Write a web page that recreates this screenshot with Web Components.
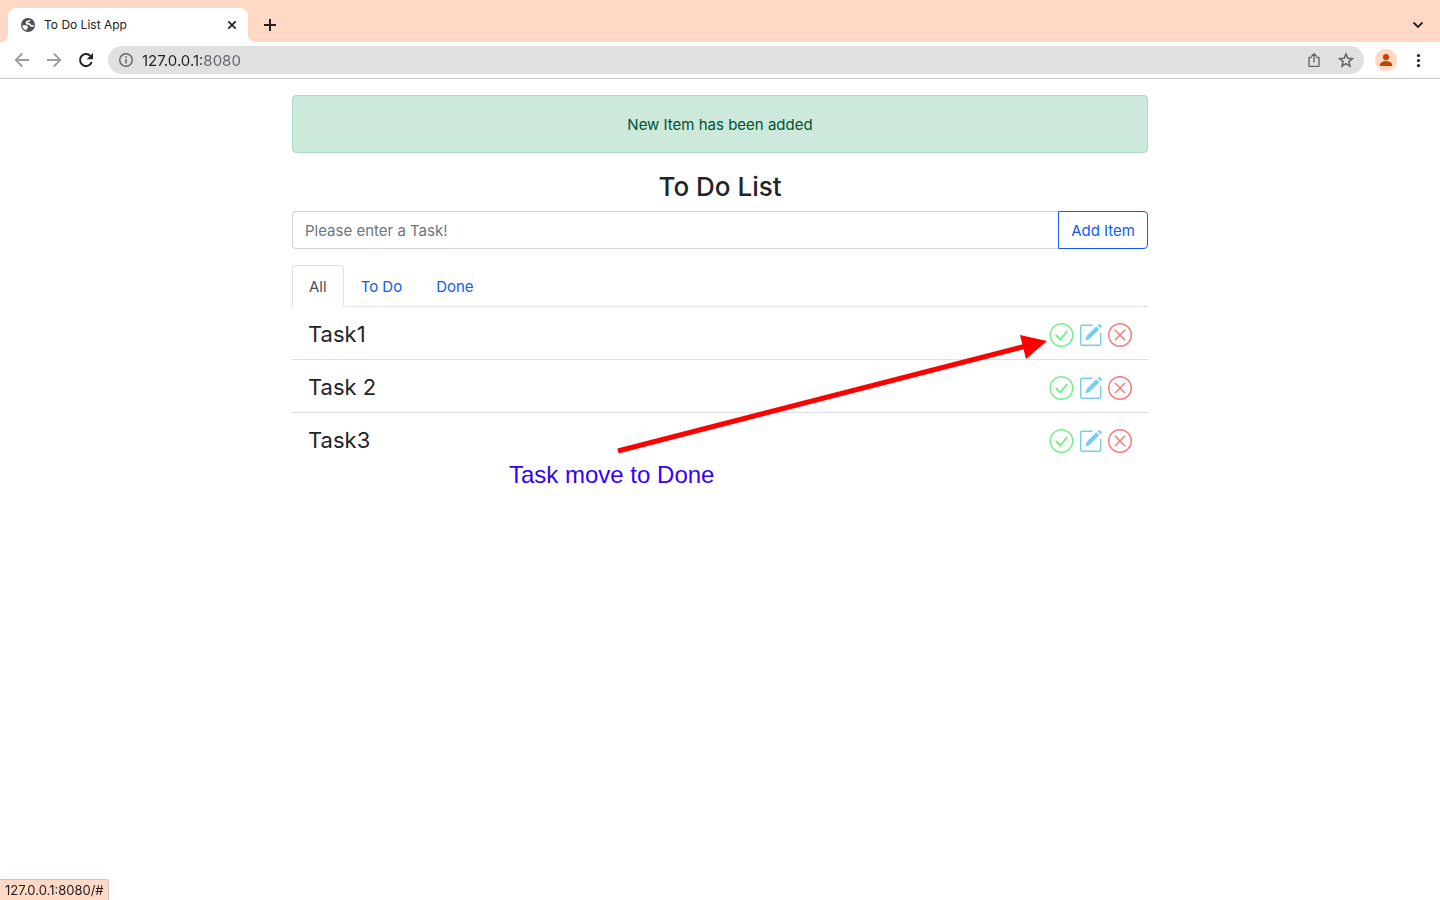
<!DOCTYPE html>
<html lang="en">
<head>
<meta charset="utf-8">
<title>To Do List App</title>
<style>
  body { margin: 0; background: #fff; font-family: Inter, Roboto, "Liberation Sans", sans-serif; color: #212529; }
</style>
</head>
<body>
<browser-window>
  <tab-strip slot="tabs"><browser-tab>To Do List App</browser-tab></tab-strip>
  <browser-toolbar slot="toolbar"></browser-toolbar>
  <todo-app>
    <alert-box slot="alert">New Item has been added</alert-box>
    <task-form slot="form"></task-form>
    <task-tabs slot="tabs"></task-tabs>
    <task-item>Task1</task-item>
    <task-item>Task 2</task-item>
    <task-item>Task3</task-item>
    <arrow-note slot="note">Task move to Done</arrow-note>
  </todo-app>
  <link-status slot="status">127.0.0.1:8080/#</link-status>
</browser-window>
<script>
const define = (name, markup) => {
  const template = document.createElement('template');
  template.innerHTML = '<style>*{box-sizing:border-box}svg{display:block}button{font:inherit;padding:0;border:0;background:none;cursor:pointer}</style>' + markup;
  customElements.define(name, class extends HTMLElement {
    constructor() {
      super();
      this.attachShadow({ mode: 'open' }).append(template.content.cloneNode(true));
    }
  });
};

define('browser-window', `
<style>:host{display:flex;flex-direction:column;min-height:100vh}main{flex:1}</style>
<header><slot name="tabs"></slot><slot name="toolbar"></slot></header>
<main><slot></slot></main>
<slot name="status"></slot>`);

define('tab-strip', `
<style>
:host{display:flex;align-items:flex-end;background:#ffd9c6;padding:8px 16px 0 8px}
button{display:grid;place-items:center;width:28px;height:34px}
.new{margin-left:8px}.search{width:12px;margin-left:auto}
</style>
<slot></slot>
<button class="new" aria-label="New tab"><svg width="14" height="14" viewBox="0 0 14 14"><path d="M7 1v12M1 7h12" stroke="#202124" stroke-width="2"/></svg></button>
<button class="search" aria-label="Search tabs"><svg width="12" height="8" viewBox="0 0 12 8"><path d="M1.500 1.500L6 6l4.500-4.500" fill="none" stroke="#202124" stroke-width="1.800"/></svg></button>`);

define('browser-tab', `
<style>
:host{display:flex;align-items:center;position:relative;width:240px;height:34px;padding:0 10px 0 12px;box-sizing:border-box;background:#fff;border-radius:8px 8px 0 0;font-size:12px;color:#202124}
:host::before,:host::after{content:"";position:absolute;bottom:0;width:8px;height:8px}
:host::before{right:100%;background:radial-gradient(circle at 0 0,transparent 8px,#fff 8px)}
:host::after{left:100%;background:radial-gradient(circle at 100% 0,transparent 8px,#fff 8px)}
span{flex:1;padding:0 0 2px 8px}
button{display:grid;place-items:center;width:12px;height:16px}
</style>
<svg width="16" height="16" viewBox="0 0 16 16"><circle cx="8" cy="8" r="7" fill="#4c5057"/><path d="M9.700 3.200c-.4 1-1 1.300-2 1.400-.8.100-1.200.5-1.200 1.100 0 .8.600 1.100 1.400 1.100h1c.8 0 1.200.4 1.300 1.100.1.700.6 1 1.300 1h2.200" fill="none" stroke="#fff" stroke-width="1.700"/><path d="M2.200 8.300h3.300c1.500 0 2.300.7 2.300 1.800v.6c0 .5-.5.800-1 .8v1.800A5.600 5.600 0 0 1 2.200 8.300z" fill="#fff"/></svg>
<span><slot></slot></span>
<button aria-label="Close tab"><svg width="10" height="10" viewBox="0 0 10 10"><path d="M1.300 1.300l7.400 7.400M8.700 1.300L1.300 8.700" stroke="#202124" stroke-width="1.700"/></svg></button>`);

define('browser-toolbar', `
<style>
:host{display:flex;align-items:center;height:37px;padding:0 16px 0 14px;box-sizing:border-box;background:#fff;border-bottom:1px solid #cacaca}
.nav{display:flex;gap:16px}
form{flex:1;display:flex;align-items:center;height:28px;margin:0 10px 0 14px;padding:0 10px;border-radius:14px;background:#e0e0e0}
input{flex:1;min-width:0;margin:0;padding:0 8px;border:0;outline:0;font:15px Inter,Roboto,sans-serif;color:#202124;background:linear-gradient(90deg,#202124 67px,#5f6368 67px);-webkit-background-clip:text;background-clip:text;-webkit-text-fill-color:transparent}
.tools{display:flex;gap:16px}
.avatar{width:24px;height:24px;border-radius:12px;overflow:hidden}
.more{margin-left:10px}
</style>
<div class="nav">
<button aria-label="Back"><svg width="16" height="16" viewBox="0 0 16 16"><path d="M15 8H2M8.200 1.500L1.700 8l6.500 6.500" fill="none" stroke="#9b9ca0" stroke-width="1.800"/></svg></button>
<button aria-label="Forward"><svg width="16" height="16" viewBox="0 0 16 16"><path d="M1 8h13M7.800 1.500L14.300 8l-6.500 6.500" fill="none" stroke="#9b9ca0" stroke-width="1.800"/></svg></button>
<button aria-label="Reload"><svg width="16" height="16" viewBox="0 0 16 16"><path d="M13.700 10A6 6 0 1 1 12.400 3.900" fill="none" stroke="#202124" stroke-width="2"/><path d="M15 1v6.300H8.700z" fill="#202124"/></svg></button>
</div>
<form>
<svg width="16" height="16" viewBox="0 0 16 16"><circle cx="8" cy="8" r="6.300" fill="none" stroke="#5f6368" stroke-width="1.400"/><path d="M8 7v4.500M8 4.200v1.600" stroke="#5f6368" stroke-width="1.500"/></svg>
<input aria-label="Address" value="127.0.0.1:8080">
<div class="tools">
<button type="button" aria-label="Share"><svg width="16" height="16" viewBox="0 0 16 16"><path d="M5.500 5.500H3v8.800h10V5.500h-2.500M8 10.500V2M5.300 4.500L8 1.700l2.700 2.800" fill="none" stroke="#5f6368" stroke-width="1.300" stroke-linejoin="round"/></svg></button>
<button type="button" aria-label="Bookmark"><svg width="16" height="16" viewBox="0 0 16 16"><path d="M8 2l1.800 4.200 4.600.4-3.500 3 1.100 4.500L8 11.700l-4 2.400 1.100-4.500-3.500-3 4.600-.4z" fill="none" stroke="#5f6368" stroke-width="1.500"/></svg></button>
</div>
</form>
<button class="avatar" aria-label="Profile"><svg width="24" height="24" viewBox="0 0 24 24"><circle cx="12" cy="12" r="11" fill="#ffd9c6"/><circle cx="12" cy="9" r="3.100" fill="#c84300"/><path d="M6 18v-1.500c0-2 3.500-3.500 6-3.500s6 1.500 6 3.500V18z" fill="#c84300"/></svg></button>
<button class="more" aria-label="Menu"><svg width="16" height="16" viewBox="0 0 16 16" fill="#202124"><circle cx="10.500" cy="3.500" r="1.600"/><circle cx="10.500" cy="8.500" r="1.600"/><circle cx="10.500" cy="13.500" r="1.600"/></svg></button>`);

define('todo-app', `
<style>
:host{display:flex;justify-content:center;max-width:1320px;margin:0 auto}
section{position:relative;width:66.667%;padding:16px 12px}
h1{margin:16px 0 6px;text-align:center;font-size:26px;line-height:36px;font-weight:500}
</style>
<section><slot name="alert"></slot><h1>To Do List</h1><slot name="form"></slot><slot name="tabs"></slot><slot></slot><slot name="note"></slot></section>`);

define('alert-box', `
<style>:host{display:block;padding:17px 16px 15px;border:1px solid #a9dbc5;border-radius:4px;background:#cce9dc;color:#00532f;font-size:15px;line-height:24px;text-align:center}</style>
<div role="alert"><slot></slot></div>`);

define('task-form', `
<style>
:host{display:block}form{display:flex;height:38px}
input{flex:1;min-width:0;margin:0;padding:0 12px;border:1px solid #ced4da;border-right:0;border-radius:4px 0 0 4px;font:15px Inter,Roboto,sans-serif;color:#212529;outline:0}
input::placeholder{color:#6c757d;opacity:1}
button{padding:2px 12px 0;border:1px solid #0f5cfa;border-radius:0 4px 4px 0;color:#0f5cfa;font-size:15px;line-height:24px}
</style>
<form><input aria-label="Task" placeholder="Please enter a Task!"><button type="button">Add Item</button></form>`);

define('task-tabs', `
<style>
:host{display:block;margin-top:16px}
nav{display:flex;border-bottom:1px solid #dee2e6}
a{padding:9px 16px 7px;margin-bottom:-1px;border:1px solid transparent;border-radius:4px 4px 0 0;color:#0f5cfa;font-size:15px;line-height:24px;text-decoration:none}
a[aria-current]{color:#495057;background:#fff;border-color:#dee2e6 #dee2e6 #fff}
</style>
<nav><a href="#all" aria-current="page">All</a><a href="#todo">To Do</a><a href="#done">Done</a></nav>`);

define('task-item', `
<style>
:host{display:flex;align-items:center;justify-content:space-between;height:53px;padding:0 16px;box-sizing:border-box;border-bottom:1px solid #dfdfdf}
:host(:last-of-type){border-color:transparent}
h2{margin:0;padding-top:2px;font-size:22px;line-height:30px;font-weight:400}
div{display:flex;gap:5px;padding-top:4px}
</style>
<h2><slot></slot></h2>
<div>
<a href="#" aria-label="Mark as done"><svg width="25" height="24" viewBox="0 0 25 24" fill="none" stroke="#71f18d"><circle cx="12.500" cy="12" r="11.300" stroke-width="1.400"/><path d="M7.300 12.500l4 4 6.500-8" stroke-width="1.900" stroke-linecap="round"/></svg></a>
<a href="#" aria-label="Edit"><svg width="24" height="24" viewBox="0 0 24 24"><path d="M13 2.200H3q-1.300 0-1.300 1.300v17.500q0 1.300 1.300 1.300h17.400q1.300 0 1.300-1.300V10.500" fill="none" stroke="#76cdf0" stroke-width="1.400" stroke-linecap="round"/><path d="M6.200 17.600l1.400-4.600L17.300 3.300l2.900 2.900-9.700 9.700zM18.600 2.300l1.100-1.100q.7-.6 1.400 0l1.500 1.500q.6.700 0 1.400l-1.100 1.100z" fill="#76cdf0"/></svg></a>
<a href="#" aria-label="Delete"><svg width="24" height="24" viewBox="0 0 24 24" fill="none" stroke="#f77878"><circle cx="12" cy="12" r="11.300" stroke-width="1.400"/><path d="M7.300 7.300l9.400 9.400M16.700 7.300l-9.400 9.400" stroke-width="1.400" stroke-linecap="round"/></svg></a>
</div>`);

define('arrow-note', `
<style>
:host{position:absolute;right:112px;top:256px;width:539px;pointer-events:none;font:24px/32px "Liberation Sans",Arial,sans-serif;color:#30f}
svg{margin-left:107px}
p{margin:0}
</style>
<svg width="432" height="124" viewBox="0 0 432 124"><path d="M2 116L410 11" stroke="red" stroke-width="5"/><path d="M431 6L404 0l6 24z" fill="red"/></svg>
<p><slot></slot></p>`);

define('link-status', `
<style>:host{position:fixed;left:0;bottom:0;height:21px;padding:0 4px 0 5px;box-sizing:border-box;background:#ffd9c6;border:1px solid #c9c5c2;border-width:1px 1px 0 0;border-radius:0 4px 0 0;box-shadow:0 0 12px #0001;font-size:13px;line-height:20px;color:#202124}</style>
<slot></slot>`);
</script>
</body>
</html>
